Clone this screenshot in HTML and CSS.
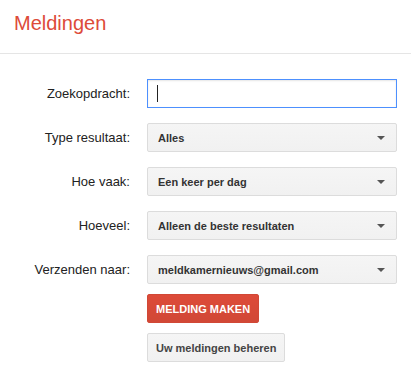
FILE: index.html
```html
<!DOCTYPE html>
<html lang="nl">
<head>
<meta charset="utf-8">
<title>Meldingen</title>
<link rel="stylesheet" href="styles.css">
</head>
<body>
<header class="header">
  <h1 class="title">Meldingen</h1>
</header>
<form class="form">
  <div class="fields">
    <label class="label" for="q">Zoekopdracht:</label>
    <div class="input"><span class="caret"></span></div>

    <span class="label">Type resultaat:</span>
    <div class="select"><span class="select-text">Alles</span><span class="arrow"></span></div>

    <span class="label">Hoe vaak:</span>
    <div class="select"><span class="select-text">Een keer per dag</span><span class="arrow"></span></div>

    <span class="label">Hoeveel:</span>
    <div class="select"><span class="select-text">Alleen de beste resultaten</span><span class="arrow"></span></div>

    <span class="label">Verzenden naar:</span>
    <div class="select"><span class="select-text">meldkamernieuws@gmail.com</span><span class="arrow"></span></div>
  </div>
  <div class="actions">
    <button type="button" class="btn btn-red">MELDING MAKEN</button>
    <button type="button" class="btn btn-gray">Uw meldingen beheren</button>
  </div>
</form>
</body>
</html>
```

FILE: styles.css
```css
* { box-sizing: border-box; }
html, body { margin: 0; padding: 0; background: #fff; }
body {
  font-family: "Liberation Sans", Arial, sans-serif;
  color: #222;
  width: 411px;
  height: 371px;
  overflow: hidden;
}
.header {
  height: 54px;
  border-bottom: 1px solid #e5e5e5;
  padding: 11px 0 0 14px;
}
.title {
  margin: 0;
  font-size: 20px;
  font-weight: normal;
  color: #dd4b39;
  line-height: 24px;
}
.form {
  padding-top: 25px;
}
.fields {
  display: grid;
  grid-template-columns: 130px 250px;
  column-gap: 17px;
  row-gap: 15px;
  align-items: center;
}
.label {
  text-align: right;
  font-size: 13px;
  color: #222;
  white-space: nowrap;
}
.input {
  height: 29px;
  border: 1px solid #4d90fe;
  background: #fff;
  box-shadow: inset 0 1px 2px rgba(0,0,0,0.1);
  display: flex;
  align-items: center;
  padding-left: 9px;
}
.caret {
  width: 1px;
  height: 17px;
  background: #222;
}
.select {
  height: 29px;
  border: 1px solid #dcdcdc;
  border-radius: 2px;
  background: linear-gradient(#f5f5f5, #f1f1f1);
  display: flex;
  align-items: center;
  justify-content: space-between;
  padding: 0 10px 0 10px;
}
.select-text {
  font-size: 11px;
  font-weight: bold;
  color: #333;
}
.arrow {
  width: 0;
  height: 0;
  border-left: 4px solid transparent;
  border-right: 4px solid transparent;
  border-top: 4px solid #555;
  margin-right: 1px;
}
.actions {
  margin-left: 147px;
  padding-top: 10px;
  display: flex;
  flex-direction: column;
  align-items: flex-start;
  gap: 10px;
}
.btn {
  height: 29px;
  padding: 0 8px;
  border-radius: 2px;
  font-family: "Liberation Sans", Arial, sans-serif;
  font-size: 11px;
  font-weight: bold;
  cursor: pointer;
}
.btn-red {
  background: linear-gradient(#dd4b39, #d14836);
  border: 1px solid #d14836;
  color: #fff;
}
.btn-gray {
  background: linear-gradient(#f5f5f5, #f1f1f1);
  border: 1px solid #dcdcdc;
  color: #444;
}
```
